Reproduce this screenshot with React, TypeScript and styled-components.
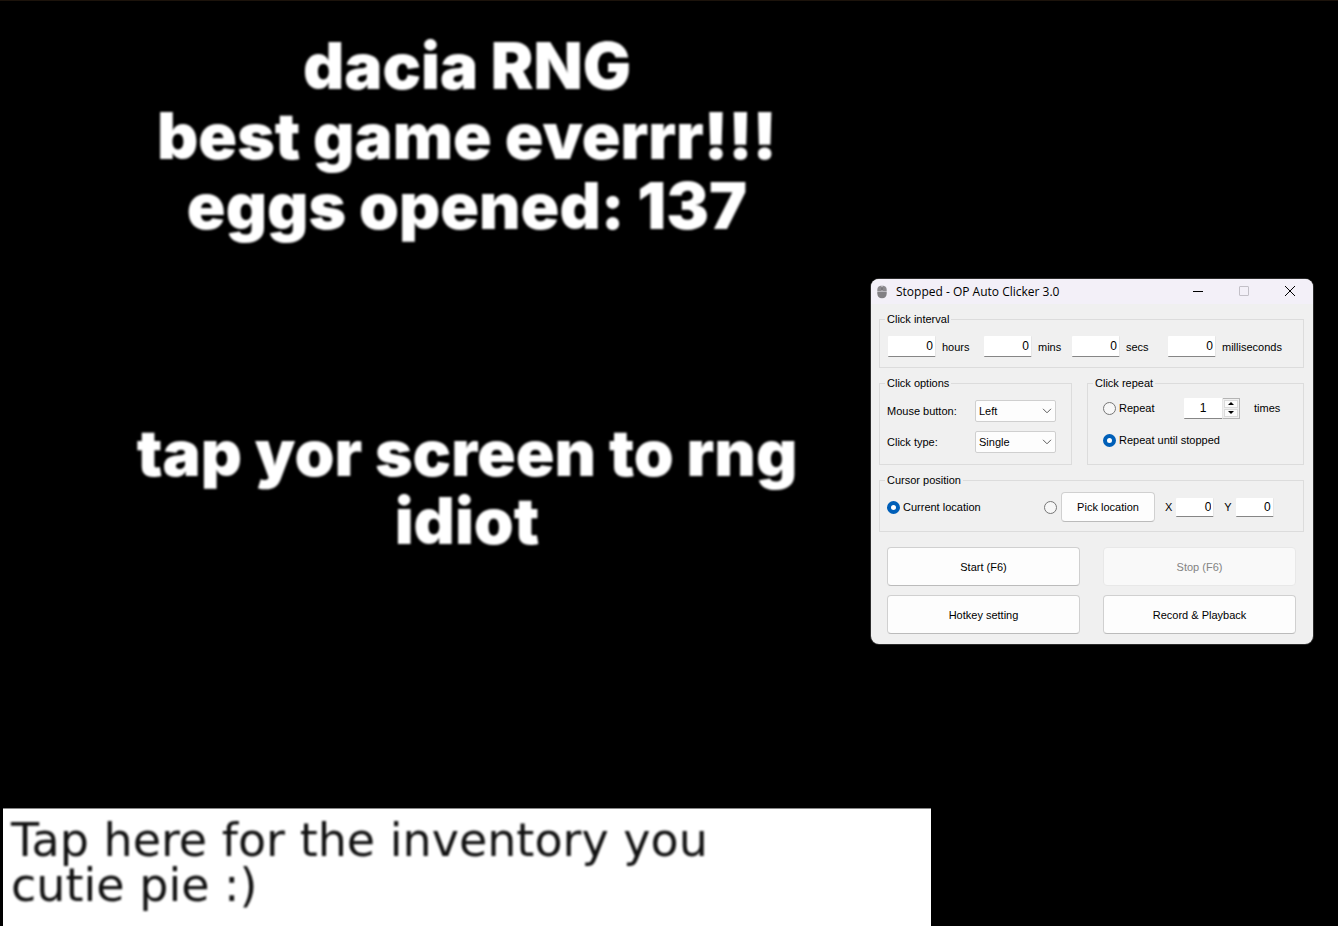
import React from "react";
import styled, { createGlobalStyle } from "styled-components";

const GlobalStyle = createGlobalStyle`
  *, *::before, *::after { box-sizing: border-box; }
  body { margin: 0; background: #000; }
  button, input, select { font: inherit; color: inherit; }
`;

const Desktop = styled.div`
  position: relative;
  display: flex;
  min-height: 100vh;
  background: #000;
  border-top: 1px solid #1c130b;
`;

const Game = styled.main`
  flex: 0 0 auto;
  display: flex;
  flex-direction: column;
  width: 69.36%;
  margin-left: 3px;
  padding-top: 30px;
  color: #fff;
  font-family: Inter, "Liberation Sans", sans-serif;
  font-weight: 900;
  text-align: center;
`;

const Headline = styled.h1`
  margin: 0;
  font-size: 64px;
  font-weight: 900;
  line-height: 70px;
  filter: blur(1px);
`;

const TapHint = styled.p`
  margin: 178px 0 0;
  font-size: 64px;
  line-height: 68px;
  filter: blur(1px);
`;

const Inventory = styled.button`
  margin-top: auto;
  padding: 9px 8px 18px;
  min-height: 118px;
  border: 0;
  border-top: 1px solid #888;
  background: #fff;
  text-align: left;
`;

const InventoryText = styled.span`
  display: block;
  color: #111;
  font-family: "DejaVu Sans", sans-serif;
  font-weight: 400;
  font-size: 46px;
  line-height: 45px;
  filter: blur(1px);
`;

const Window = styled.section`
  position: absolute;
  top: 278px;
  right: 25px;
  width: 442px;
  border-radius: 8px;
  background: #f0f0f0;
  box-shadow: 0 0 0 1px #2c2c2c;
  color: #000;
  font-family: "Liberation Sans", sans-serif;
  font-size: 11px;
  line-height: 14px;
  overflow: hidden;
`;

const TitleBar = styled.header`
  display: flex;
  align-items: center;
  height: 25px;
  padding-left: 6px;
  background: #f3f0f8;
`;

const Title = styled.h2`
  flex: 1;
  margin: 0 0 0 9px;
  font-family: "Open Sans", sans-serif;
  font-size: 12px;
  font-weight: 400;
  line-height: 16px;
`;

const CaptionButton = styled.button`
  display: grid;
  place-items: center;
  width: 46px;
  height: 25px;
  padding: 0 0 1px;
  border: 0;
  background: none;
`;

const Body = styled.form`
  display: flex;
  flex-direction: column;
  gap: 8px;
  padding: 8px 9px 10px 8px;
`;

const Split = styled.div`
  display: grid;
  grid-template-columns: 193px 1fr;
  gap: 15px;
`;

const Group = styled.fieldset`
  min-width: 0;
  margin: 0;
  padding: 0 7px;
  border: 1px solid #dcdcdc;
`;

const Legend = styled.legend`
  margin-left: -2px;
  padding: 0 2px;
`;

const IntervalRow = styled.div`
  display: grid;
  grid-template-columns: 96px 88px 96px 1fr;
  height: 41px;
  padding: 10px 0 0 1px;
`;

const Unit = styled.label`
  display: flex;
  align-items: center;
  align-self: start;
  gap: 6px;
`;

const Field = styled.input<{ $w: number; $h: number; $center?: boolean }>`
  width: ${(p) => p.$w}px;
  height: ${(p) => p.$h}px;
  padding: 0 2px;
  border: 0;
  border-right: 1px solid #e6e6e6;
  border-bottom: 1px solid #868686;
  border-radius: 1px;
  background: #fff;
  font-size: 12px;
  text-align: ${(p) => (p.$center ? "center" : "right")};
`;

const OptionRows = styled.div`
  display: grid;
  gap: 9px;
  padding: 10px 8px 11px 0;
`;

const OptionRow = styled.label`
  display: flex;
  align-items: center;
  justify-content: space-between;
`;

const SelectBox = styled.span`
  position: relative;
  width: 81px;
  height: 22px;

  svg {
    position: absolute;
    top: 8px;
    right: 4px;
    pointer-events: none;
  }
`;

const Select = styled.select`
  appearance: none;
  width: 100%;
  height: 100%;
  padding: 0 3px;
  border: 1px solid #cfcfcf;
  border-radius: 2px;
  background: #fdfdfd;
`;

const RepeatRows = styled.div`
  display: grid;
  gap: 10px;
  padding: 7px 8px 12px;
`;

const RepeatRow = styled.div`
  display: flex;
  align-items: center;
  height: 22px;
`;

const RadioLabel = styled.label<{ $w?: number }>`
  display: flex;
  align-items: center;
  gap: 3px;
  width: ${(p) => (p.$w ? p.$w + "px" : "auto")};
  white-space: nowrap;
`;

const Radio = styled.input.attrs({ type: "radio" })`
  appearance: none;
  flex: none;
  width: 13px;
  height: 13px;
  margin: 0;
  border: 1px solid #767676;
  border-radius: 50%;
  background: #f7f7f7;

  &:checked {
    border: 4px solid #005fb8;
    background: #fff;
  }
`;

const Spinner = styled.span`
  display: flex;
  margin-right: 14px;
`;

const Arrows = styled.span`
  display: grid;
  width: 17px;
  height: 21px;
  padding: 1px;
  gap: 1px;
  border: 1px solid #b4b4b4;
  border-left: 0;
`;

const Arrow = styled.button`
  display: grid;
  place-items: center;
  min-height: 0;
  padding: 0;
  border: 1px solid #dadada;
  background: #fbfbfb;
`;

const CursorRow = styled.div`
  display: flex;
  align-items: center;
  height: 44px;
  padding-bottom: 4px;
`;

const Axis = styled.label`
  display: flex;
  align-items: center;
  gap: 4px;
  margin-left: 10px;
`;

const Push = styled.button<{ $w?: number; $h: number }>`
  width: ${(p) => (p.$w ? p.$w + "px" : "auto")};
  height: ${(p) => p.$h}px;
  padding: 0;
  border: 1px solid #d0d0d0;
  border-bottom-color: #bbb;
  border-radius: 4px;
  background: #fdfdfd;

  &:disabled {
    border-color: #e8e8e8;
    background: #f9f9f9;
    color: #838383;
  }
`;

const Actions = styled.div`
  display: grid;
  grid-template-columns: 1fr 1fr;
  gap: 9px 23px;
  padding: 7px 8px 0;
`;

const Chevron = () => (
  <svg width="10" height="6" viewBox="0 0 10 6" fill="none" stroke="#5c5c5c" aria-hidden="true">
    <path d="M1 .8 5 4.8 9 .8" />
  </svg>
);

const MouseIcon = () => (
  <svg width="10" height="14" viewBox="0 0 10 14" aria-hidden="true">
    <path d="M4.6 .6V6H.3V4.8C.3 2.4 1.8.8 4.6.6Z" fill="#8b898d" />
    <path d="M5.4 .6V6H9.7V4.8C9.7 2.4 8.2.8 5.4.6Z" fill="#8b898d" />
    <path d="M.3 6.5H9.7V8.5C9.7 11.6 8 13.2 5 13.2S.3 11.6 .3 8.5Z" fill="#828084" />
    <rect x="4.2" y="2" width="1.6" height="3.6" rx=".8" fill="#6b696d" />
  </svg>
);

const units = ["hours", "mins", "secs", "milliseconds"];

export default function App() {
  return (
    <>
      <GlobalStyle />
      <Desktop>
        <Game>
          <Headline>
            dacia RNG
            <br />
            best game everrr!!!
            <br />
            eggs opened: 137
          </Headline>
          <TapHint>
            tap yor screen to rng
            <br />
            idiot
          </TapHint>
          <Inventory type="button">
            <InventoryText>
              Tap here for the inventory you
              <br />
              cutie pie :)
            </InventoryText>
          </Inventory>
        </Game>

        <Window aria-label="OP Auto Clicker">
          <TitleBar>
            <MouseIcon />
            <Title>Stopped - OP Auto Clicker 3.0</Title>
            <CaptionButton aria-label="Minimize">
              <svg width="10" height="10" viewBox="0 0 10 10" stroke="#000">
                <path d="M0 5.5H10" />
              </svg>
            </CaptionButton>
            <CaptionButton aria-label="Maximize" disabled>
              <svg width="10" height="10" viewBox="0 0 10 10" fill="none" stroke="#c3c0c8">
                <rect x=".5" y=".5" width="9" height="9" rx=".5" />
              </svg>
            </CaptionButton>
            <CaptionButton aria-label="Close">
              <svg width="10" height="10" viewBox="0 0 10 10" stroke="#000">
                <path d="M0 0 10 10M10 0 0 10" />
              </svg>
            </CaptionButton>
          </TitleBar>

          <Body onSubmit={(e) => e.preventDefault()}>
            <Group>
              <Legend>Click interval</Legend>
              <IntervalRow>
                {units.map((unit) => (
                  <Unit key={unit}>
                    <Field $w={48} $h={21} defaultValue="0" />
                    {unit}
                  </Unit>
                ))}
              </IntervalRow>
            </Group>

            <Split>
              <Group>
                <Legend>Click options</Legend>
                <OptionRows>
                  <OptionRow>
                    Mouse button:
                    <SelectBox>
                      <Select defaultValue="Left">
                        <option>Left</option>
                      </Select>
                      <Chevron />
                    </SelectBox>
                  </OptionRow>
                  <OptionRow>
                    Click type:
                    <SelectBox>
                      <Select defaultValue="Single">
                        <option>Single</option>
                      </Select>
                      <Chevron />
                    </SelectBox>
                  </OptionRow>
                </OptionRows>
              </Group>

              <Group>
                <Legend>Click repeat</Legend>
                <RepeatRows>
                  <RepeatRow>
                    <RadioLabel $w={81}>
                      <Radio name="repeat" />
                      Repeat
                    </RadioLabel>
                    <Spinner>
                      <Field $w={39} $h={21} $center defaultValue="1" aria-label="Repeat count" />
                      <Arrows>
                        <Arrow type="button" aria-label="Increase">
                          <svg width="6" height="3" viewBox="0 0 6 3">
                            <path d="M3 0 6 3H0Z" />
                          </svg>
                        </Arrow>
                        <Arrow type="button" aria-label="Decrease">
                          <svg width="6" height="3" viewBox="0 0 6 3">
                            <path d="M0 0H6L3 3Z" />
                          </svg>
                        </Arrow>
                      </Arrows>
                    </Spinner>
                    times
                  </RepeatRow>
                  <RepeatRow>
                    <RadioLabel>
                      <Radio name="repeat" defaultChecked />
                      Repeat until stopped
                    </RadioLabel>
                  </RepeatRow>
                </RepeatRows>
              </Group>
            </Split>

            <Group>
              <Legend>Cursor position</Legend>
              <CursorRow>
                <RadioLabel $w={157}>
                  <Radio name="position" defaultChecked />
                  Current location
                </RadioLabel>
                <RadioLabel $w={17}>
                  <Radio name="position" aria-label="Picked location" />
                </RadioLabel>
                <Push type="button" $w={94} $h={30}>
                  Pick location
                </Push>
                <Axis>
                  X
                  <Field $w={38} $h={19} defaultValue="0" />
                </Axis>
                <Axis>
                  Y
                  <Field $w={38} $h={19} defaultValue="0" />
                </Axis>
              </CursorRow>
            </Group>

            <Actions>
              <Push type="button" $h={39}>Start (F6)</Push>
              <Push type="button" $h={39} disabled>Stop (F6)</Push>
              <Push type="button" $h={39}>Hotkey setting</Push>
              <Push type="button" $h={39}>Record &amp; Playback</Push>
            </Actions>
          </Body>
        </Window>
      </Desktop>
    </>
  );
}
